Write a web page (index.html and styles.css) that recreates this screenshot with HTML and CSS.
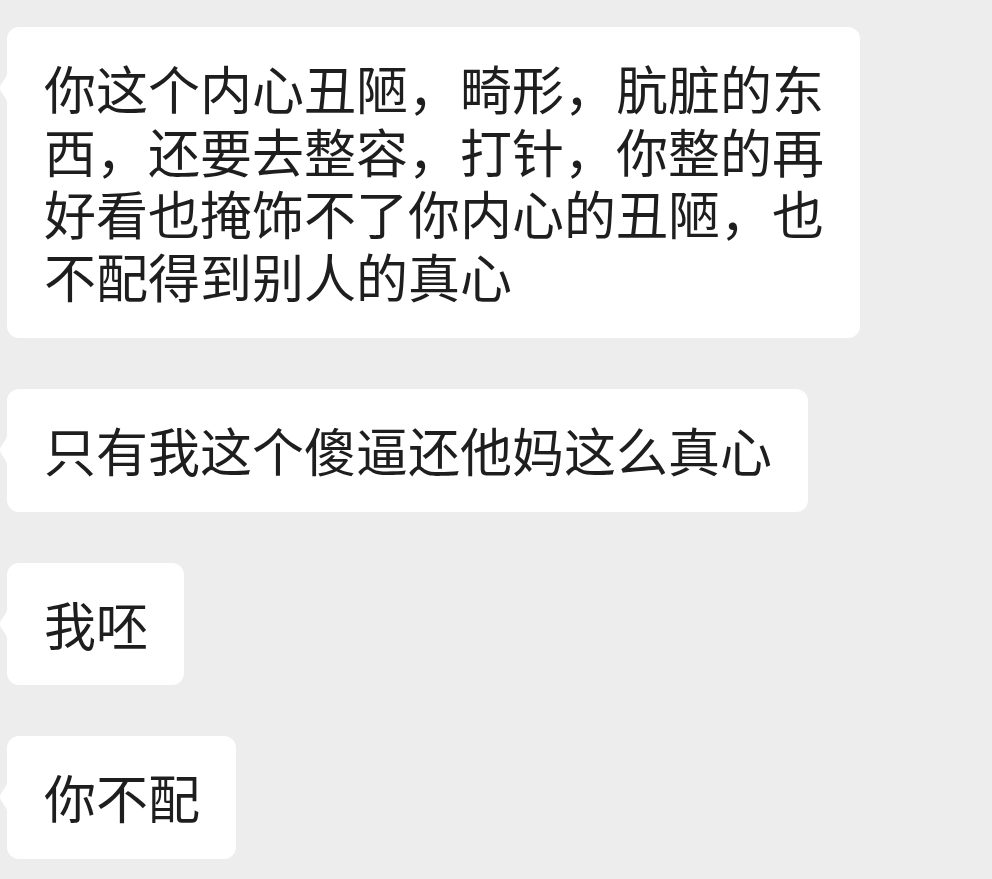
FILE: index.html
```html
<!DOCTYPE html>
<html lang="zh-CN">
  <head>
    <meta charset="UTF-8" />
    <meta name="viewport" content="width=device-width, initial-scale=1.0" />
    <title>Chat</title>
    <link rel="stylesheet" href="styles.css">
  </head>
  <body>
    <div class="chat">
      <div class="msg">
        <svg class="tail" viewBox="0 0 8 38" width="8" height="38"><path d="M8 0 C8 9 0 14 0 19 C0 24 8 29 8 38 Z" fill="#fff"/></svg>
        <div class="bubble">你这个内心丑陋，畸形，肮脏的东西，还要去整容，打针，你整的再好看也掩饰不了你内心的丑陋，也不配得到别人的真心</div>
      </div>
      <div class="msg">
        <svg class="tail" viewBox="0 0 8 38" width="8" height="38"><path d="M8 0 C8 9 0 14 0 19 C0 24 8 29 8 38 Z" fill="#fff"/></svg>
        <div class="bubble">只有我这个傻逼还他妈这么真心</div>
      </div>
      <div class="msg">
        <svg class="tail" viewBox="0 0 8 38" width="8" height="38"><path d="M8 0 C8 9 0 14 0 19 C0 24 8 29 8 38 Z" fill="#fff"/></svg>
        <div class="bubble">我呸</div>
      </div>
      <div class="msg">
        <svg class="tail" viewBox="0 0 8 38" width="8" height="38"><path d="M8 0 C8 9 0 14 0 19 C0 24 8 29 8 38 Z" fill="#fff"/></svg>
        <div class="bubble">你不配</div>
      </div>
    </div>
  </body>
</html>
```

FILE: styles.css
```css
body {
  margin: 0;
  background: #ededed;
  font-family: "Noto Sans CJK SC", "Noto Sans", sans-serif;
}
.chat {
  display: flex;
  flex-direction: column;
  align-items: flex-start;
  gap: 51px;
  padding: 27px 0 0 7px;
}
.msg {
  position: relative;
}
/* little pointer on the left side of each bubble */
.tail {
  position: absolute;
  left: -7px;
  top: 42px;
  display: block;
}
.bubble {
  background: #fff;
  border-radius: 12px;
  padding: 30px 36px 30px 37px;
  max-width: 780px;
  font-size: 52px;
  line-height: 62.7px;
  color: #1e1e1e;
  word-break: break-all;
}
```
